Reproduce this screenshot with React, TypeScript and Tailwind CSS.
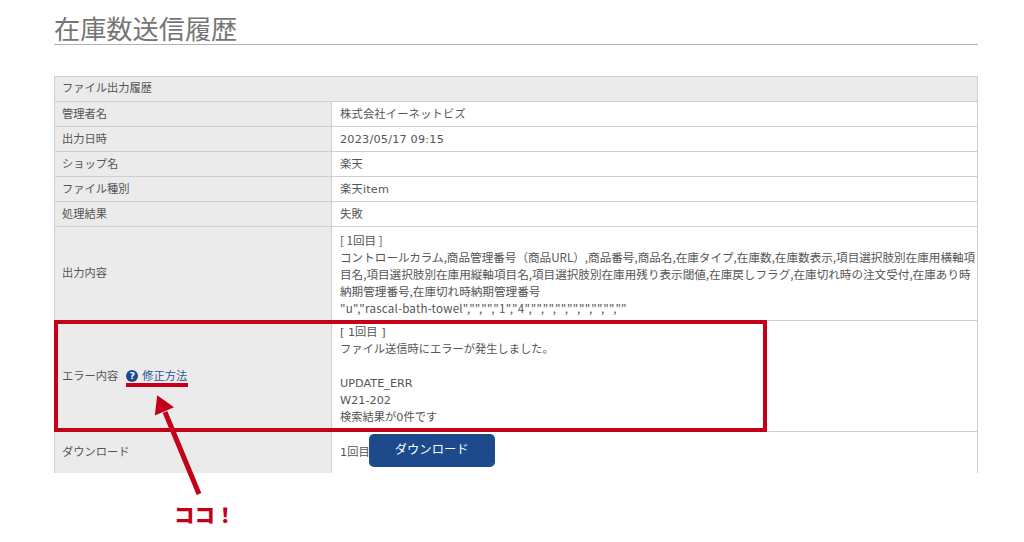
const font = { fontFamily: '"DejaVu Sans", "Noto Sans CJK JP", sans-serif' };
const cjk = { fontFamily: '"Noto Sans CJK JP", sans-serif' };

const rows = [
  { label: "管理者名", value: "株式会社イーネットビズ" },
  { label: "出力日時", value: "2023/05/17 09:15" },
  { label: "ショップ名", value: "楽天" },
  { label: "ファイル種別", value: "楽天item" },
  { label: "処理結果", value: "失敗" },
];

function Label({ children }: { children: React.ReactNode }) {
  return (
    <div className="flex w-[277px] shrink-0 items-center border-r border-[#cfcfcf] bg-[#ebebeb] pl-[7px]">
      {children}
    </div>
  );
}

export default function App() {
  return (
    <div className="relative h-[542px] w-[1024px] overflow-hidden bg-white text-[11.25px] leading-[17px] text-[#555555]" style={font}>
      <div className="pt-[12px] pr-[46px] pl-[54px]">
        {/* Title */}
        <h1 className="h-[33px] border-b border-[#b3b3b3] text-[26.2px] leading-[32px] font-normal text-[#757575]" style={cjk}>在庫数送信履歴</h1>

        {/* Table */}
        <div className="mt-[31px] w-[924px] border-x border-t border-[#cfcfcf]">
          <div className="flex h-[25px] items-center border-b border-[#cfcfcf] bg-[#ebebeb] pb-[1px] pl-[7px]">ファイル出力履歴</div>
          {rows.map((r) => (
            <div key={r.label} className="flex h-[25px] border-b border-[#cfcfcf]">
              <Label>{r.label}</Label>
              <div className="flex items-center pl-[8px] tracking-[0.2px]">{r.value}</div>
            </div>
          ))}
          <div className="flex h-[94px] border-b border-[#cfcfcf]">
            <Label>出力内容</Label>
            <div className="flex-1 pt-[5px] pl-[8px] text-[11.6px]" style={cjk}>
              <p>[ 1回目 ]</p>
              <p>コントロールカラム,商品管理番号（商品URL）,商品番号,商品名,在庫タイプ,在庫数,在庫数表示,項目選択肢別在庫用横軸項目名,項目選択肢別在庫用縦軸項目名,項目選択肢別在庫用残り表示閾値,在庫戻しフラグ,在庫切れ時の注文受付,在庫あり時納期管理番号,在庫切れ時納期管理番号</p>
              <p className="tracking-[0.2px]">"u","rascal-bath-towel","","","1","4","","","","","","","",""</p>
            </div>
          </div>
          <div className="flex h-[111px] border-b border-[#cfcfcf]">
            <Label>
              <span>エラー内容</span>
              <span className="ml-[8px] flex h-[12px] w-[12px] items-center justify-center rounded-full bg-[#1d4a8c] text-[9px] font-bold text-white">?</span>
              <a className="ml-[4px] text-[#2d5499]">修正方法</a>
            </Label>
            <div className="pt-[3px] pl-[8px]">
              <p>[ 1回目 ]</p>
              <p>ファイル送信時にエラーが発生しました。</p>
              <p className="h-[17px]"></p>
              <p>UPDATE_ERR</p>
              <p>W21-202</p>
              <p>検索結果が0件です</p>
            </div>
          </div>
          <div className="flex h-[41px]">
            <Label>ダウンロード</Label>
            <div className="flex items-center pl-[8px]">
              <span>1回目</span>
              <button className="mt-[-4px] ml-[-1px] h-[33px] w-[126px] rounded-[5px] bg-[#1d4a8c] text-[12.3px] text-white">ダウンロード</button>
            </div>
          </div>
        </div>
      </div>

      {/* Annotations */}
      <div className="absolute top-[320px] left-[54px] h-[112px] w-[713px] border-4 border-[#c40018]"></div>
      <div className="absolute top-[383px] left-[126px] h-[4px] w-[62px] bg-[#c40018]"></div>
      <svg className="absolute top-0 left-0" width="1024" height="542">
        <line x1="199" y1="494" x2="165" y2="412" stroke="#c40018" strokeWidth="5" />
        <polygon points="158,397 172,407 156,414" fill="#c40018" stroke="#c40018" strokeWidth="2" />
      </svg>
      <div className="absolute top-[500px] left-[174px] text-[20.5px] leading-[28px] font-black text-[#c40018]" style={cjk}>ココ！</div>
    </div>
  );
}
